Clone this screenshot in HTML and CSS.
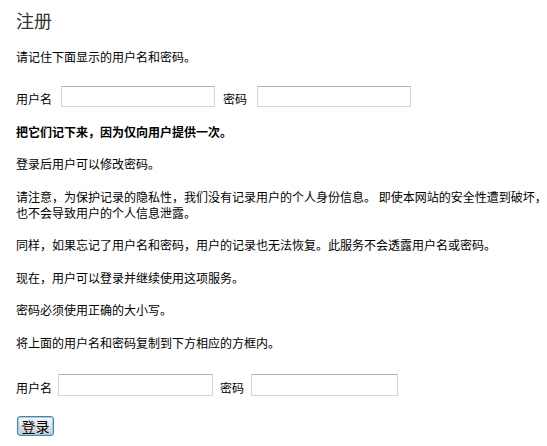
FILE: index.html
```html
<!DOCTYPE html>
<html lang="zh-CN">
<head>
  <meta charset="UTF-8">
  <title>注册</title>
  <link rel="stylesheet" href="styles.css">
</head>
<body>
  <div class="page">
    <h2 class="title">注册</h2>
    <p>请记住下面显示的用户名和密码。</p>

    <div class="form-row first">
      <label class="lbl">用户名</label>
      <input class="field user" type="text">
      <label class="lbl pw-lbl">密码</label>
      <input class="field pw" type="text">
    </div>

    <p class="strong">把它们记下来，因为仅向用户提供一次。</p>
    <p>登录后用户可以修改密码。</p>
    <p>请注意，为保护记录的隐私性，我们没有记录用户的个人身份信息。 即使本网站的安全性遭到破坏，也不会导致用户的个人信息泄露。</p>
    <p>同样，如果忘记了用户名和密码，用户的记录也无法恢复。此服务不会透露用户名或密码。</p>
    <p>现在，用户可以登录并继续使用这项服务。</p>
    <p>密码必须使用正确的大小写。</p>
    <p>将上面的用户名和密码复制到下方相应的方框内。</p>

    <div class="form-row second">
      <label class="lbl">用户名</label>
      <input class="field user" type="text">
      <label class="lbl pw-lbl">密码</label>
      <input class="field pw" type="password">
    </div>

    <button class="login">登录</button>
  </div>
</body>
</html>
```

FILE: styles.css
```css
body {
  margin: 0;
  background: #fff;
  color: #000;
  font-family: "Noto Sans CJK SC", "Liberation Sans", sans-serif;
  font-size: 12px;
  line-height: 16px;
}
.page {
  padding: 8px 0 0 16px;
}
.title {
  margin: 0 0 17px;
  font-size: 18px;
  line-height: 24px;
  font-weight: normal;
  color: #333;
}
p {
  margin: 16.5px 0;
}
.strong {
  font-weight: bold;
}
.form-row {
  display: flex;
  align-items: flex-end;
}
.form-row.first {
  margin: 21px 0 16px;
}
.form-row.second {
  margin: 23px 0 20px;
}
.lbl {
  line-height: 16px;
}
.field {
  box-sizing: border-box;
  height: 21px;
  margin: 0;
  padding: 0 3px;
  border: 1px solid #d6d6d6;
  border-top-color: #b4b4b4;
  background: #fff;
}
.first .user {
  width: 154px;
  margin: 0 8px 0 9px;
}
.first .pw {
  width: 154px;
  margin-left: 10px;
}
.second .field {
  height: 22px;
}
.second .user {
  width: 155px;
  margin: 0 7px 0 6px;
}
.second .pw {
  width: 147px;
  margin-left: 7px;
}
.login {
  display: block;
  margin-left: 1px;
  width: 37px;
  height: 20px;
  padding: 0;
  border: 1px solid #3c8bb4;
  border-radius: 3px;
  background: linear-gradient(#fafafa, #dcdcdc 60%, #c8c8c8);
  box-shadow: inset 0 0 0 1px #9fd0ea;
  font-family: "Noto Sans CJK SC", sans-serif;
  font-size: 14px;
  line-height: 18px;
  color: #000;
}
```
